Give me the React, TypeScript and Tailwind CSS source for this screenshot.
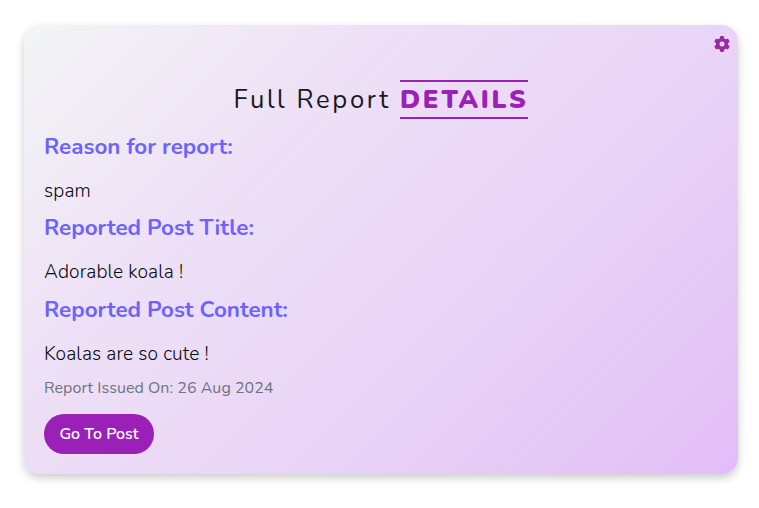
import { FaGear } from "react-icons/fa6";

const sections = [
  { title: "Reason for report:", text: "spam", height: "h-[81px]" },
  { title: "Reported Post Title:", text: "Adorable koala !", height: "h-[82px]" },
  { title: "Reported Post Content:", text: "Koalas are so cute !", height: "h-[80px]" },
];

export default function App() {
  return (
    <div className="h-[508px] w-[759px] overflow-hidden bg-white pt-[25px] pl-6 font-['Nunito','Lato',sans-serif] text-[#15191d]">
      <main className="relative h-[449px] w-[714px] rounded-[16px] bg-[linear-gradient(135deg,#f3f5f5_0%,#eee1f6_30%,#e9d4f7_62%,#e3c4f6_90%,#e3bcfa_100%)] px-5 pt-[55px] shadow-[0_4px_8px_rgba(0,0,0,0.2)]">
        <button aria-label="Settings" className="absolute top-[11px] right-[8.5px] text-[#9a2a9f]">
          <FaGear size={16} />
        </button>
        <h1 className="flex h-[39px] items-stretch pl-[189.5px] text-[25.6px] leading-[39px] whitespace-nowrap">
          <span className="w-[166.5px] tracking-[2.65px]">Full Report</span>
          <span className="w-32 border-y-2 border-[#9b20b8] leading-[35px] font-black tracking-[2.72px] text-[#9b20b8]">DETAILS</span>
        </h1>
        <div className="pt-[14px]">
          {sections.map((s) => (
            <section key={s.title} className={s.height}>
              <h2 className="text-[22.4px] leading-[28px] font-bold whitespace-nowrap text-[#6c63ff]">{s.title}</h2>
              <p className="pt-4 text-[19.2px] leading-[28px] font-light tracking-[0.13px] text-[#080a0c]">{s.text}</p>
            </section>
          ))}
        </div>
        <p className="text-base leading-6 tracking-[0.03px] text-[#6c757d]">Report Issued On: 26 Aug 2024</p>
        <button className="mt-[14px] h-10 w-[110px] rounded-full bg-[#9b20b8] text-base font-semibold whitespace-nowrap text-white">
          Go To Post
        </button>
      </main>
    </div>
  );
}
